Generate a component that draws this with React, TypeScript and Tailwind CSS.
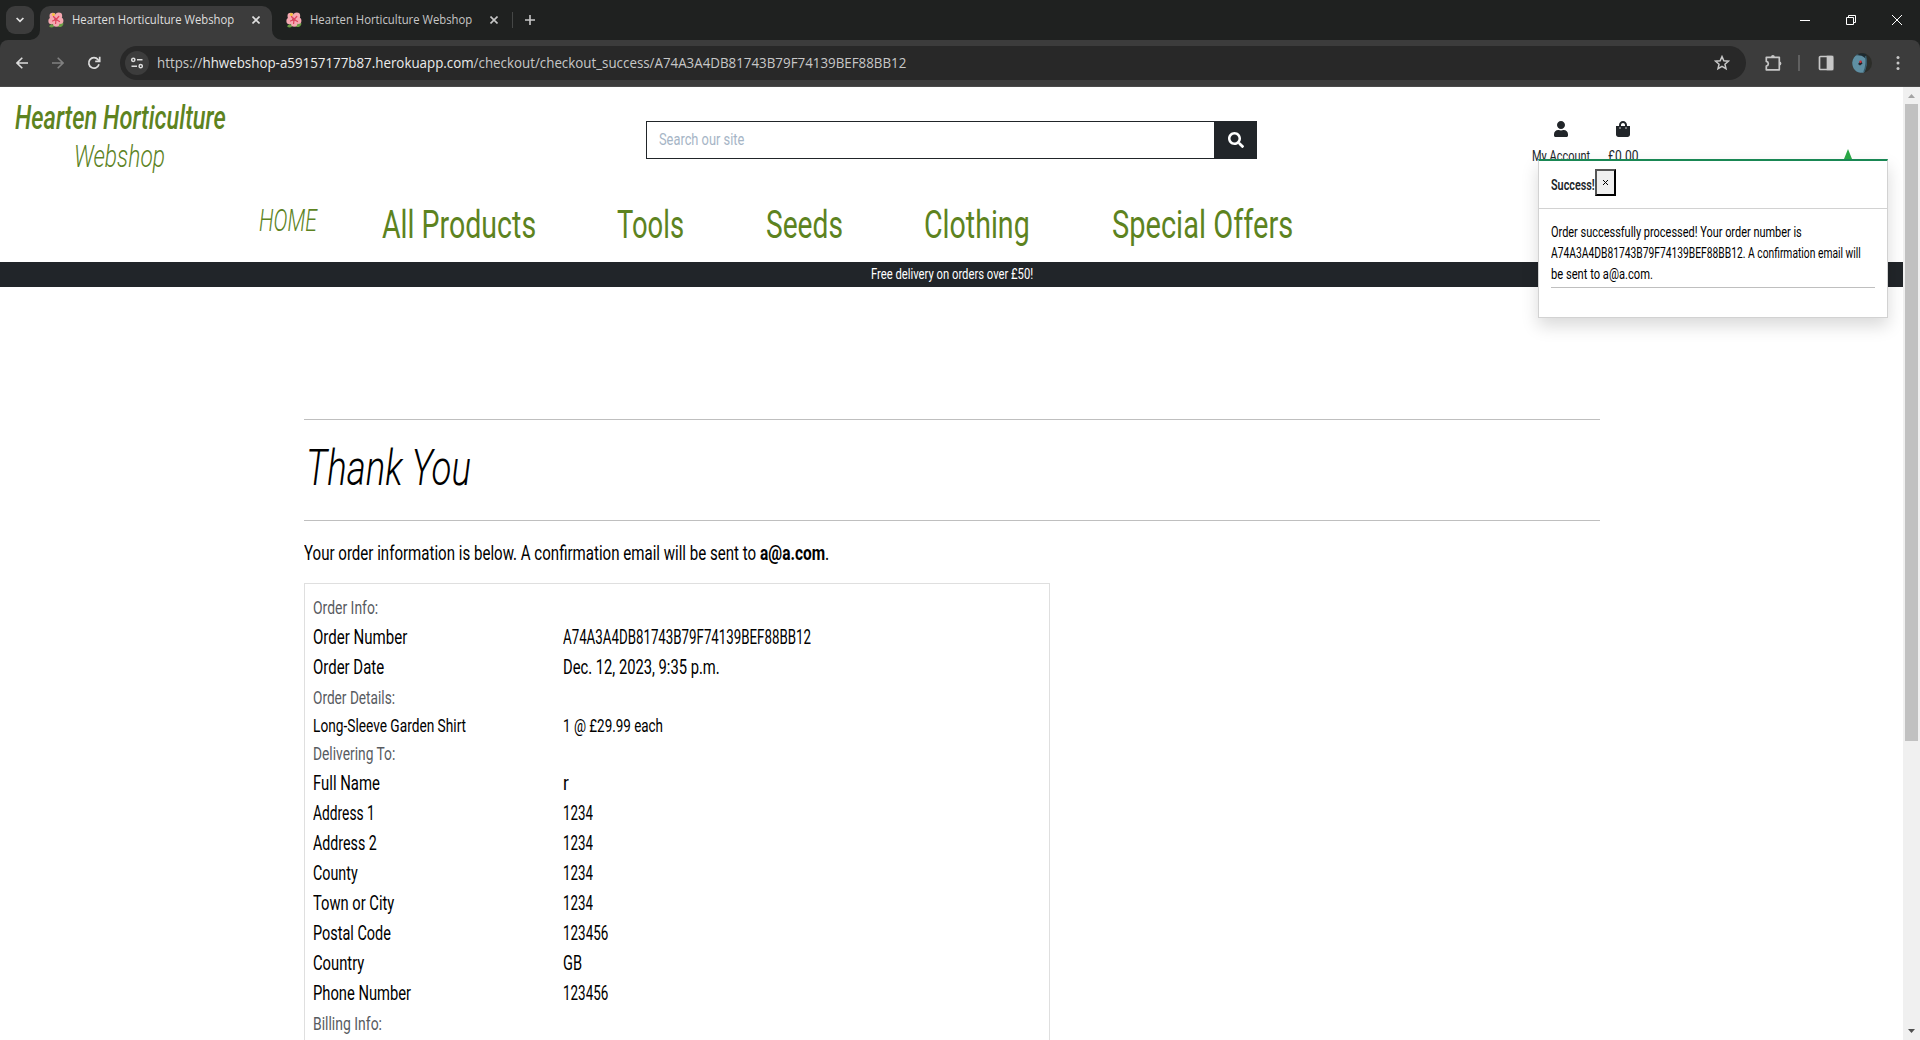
import { useLayoutEffect, useRef, useState, type ReactNode } from "react";
import { FaSearch, FaShoppingBag, FaUser } from "react-icons/fa";

/* Single-line text squeezed horizontally to a given width. */
function Fit({ w, className = "", children }: { w: number; className?: string; children: ReactNode }) {
  const ref = useRef<HTMLSpanElement>(null);
  const [scale, setScale] = useState(1);
  useLayoutEffect(() => {
    if (ref.current) setScale(w / ref.current.offsetWidth);
  }, [w]);
  return (
    <span className={`inline-block shrink-0 whitespace-nowrap text-left ${className}`} style={{ width: w }}>
      <span ref={ref} className="inline-block origin-left" style={{ transform: `scaleX(${scale})` }}>
        {children}
      </span>
    </span>
  );
}

function Hibiscus() {
  return (
    <svg viewBox="0 0 16 16" className="size-4 shrink-0">
      <path d="M1 14.200c1.500-2.400 4-2.600 6-1.200-.8 2.600-4 3.200-6 1.200zM9 14.600c1-2.800 4-4.400 6.500-3.200-.2 2.800-3.500 4.600-6.500 3.200z" fill="#6a9e45" />
      <g fill="#f5a8b1">
        <circle cx="4.800" cy="4" r="3.300" />
        <circle cx="10.800" cy="3.900" r="3.400" />
        <circle cx="12.200" cy="8.800" r="3.200" />
        <circle cx="8.200" cy="11.500" r="3.200" />
        <circle cx="3.600" cy="9" r="3.200" />
      </g>
      <path d="M8 7.500 5.500 4.500M8 7.500l2.800-3M8 7.500l3.500 2M8 7.500l-.4 4M8 7.500l-3.500 1.500" stroke="#e0425c" strokeWidth="1.200" strokeLinecap="round" />
      <circle cx="5.400" cy="2.400" r="1.500" fill="#f5c23c" />
    </svg>
  );
}

function Cross({ className }: { className: string }) {
  return (
    <svg viewBox="0 0 8 8" className={className} fill="none" stroke="currentColor" strokeWidth="1.600">
      <path d="M.5.5l7 7M7.500.5l-7 7" />
    </svg>
  );
}

function TabStrip() {
  return (
    <div className="flex h-10 bg-[#1f2120] pl-1.5 text-[12px] text-[#dfdfdf]">
      <div className="mt-1.5 flex size-7 items-center justify-center rounded-[9px] bg-[#3c3c3c]">
        <svg viewBox="0 0 8 6" className="h-1.5 w-2" fill="none" stroke="#e3e3e3" strokeWidth="1.700">
          <path d="M.6 1 4 4.400 7.400 1" />
        </svg>
      </div>
      <div className="relative ml-1.5 mt-1.5 flex w-[232px] items-center rounded-t-[10px] bg-[#3c3c3c] pb-[1px] pl-2">
        <svg viewBox="0 0 10 10" className="absolute -left-2.5 bottom-0 size-2.5" fill="#3c3c3c"><path d="M10 0v10H0A10 10 0 0 0 10 0z" /></svg>
        <svg viewBox="0 0 10 10" className="absolute -right-2.5 bottom-0 size-2.5" fill="#3c3c3c"><path d="M0 0v10h10A10 10 0 0 1 0 0z" /></svg>
        <span className="-mt-[5px]"><Hibiscus /></span>
        <Fit w={162} className="-mt-[5px] ml-2">Hearten Horticulture Webshop</Fit>
        <Cross className="-mt-[5px] ml-[18px] size-2" />
      </div>
      <div className="flex h-10 items-center pl-[14px] text-[#c7c7c7]">
        <Hibiscus />
        <Fit w={162} className="ml-2">Hearten Horticulture Webshop</Fit>
        <Cross className="ml-[18px] size-2" />
        <div className="ml-[14px] h-4 w-px bg-[#454746]" />
        <svg viewBox="0 0 10 10" className="ml-3 size-2.5" stroke="currentColor" strokeWidth="1.600"><path d="M5 0v10M0 5h10" /></svg>
      </div>
      <div className="ml-auto mr-[18px] flex h-10 items-center text-white">
        <svg viewBox="0 0 10 10" className="size-2.5" stroke="currentColor"><path d="M0 5.500h10" /></svg>
        <svg viewBox="0 0 10 10" className="ml-9 size-2.5" fill="none" stroke="currentColor"><path d="M.5 2.500h7v7h-7zM2.500 2.500v-2h7v7h-2" /></svg>
        <svg viewBox="0 0 10 10" className="ml-9 size-2.5" stroke="currentColor"><path d="M0 0l10 10M10 0 0 10" /></svg>
      </div>
    </div>
  );
}

function Toolbar() {
  return (
    <div className="bg-[#1f2120]">
      <div className="flex h-[47px] items-center rounded-t-lg border-b border-[#4a4a4a] bg-[#3c3c3c] pl-4 text-[#c7c7c7]">
        <svg viewBox="0 0 12 12" className="size-3" fill="none" stroke="#dcdcdc" strokeWidth="1.600"><path d="M12 6H1M6.300.7 1 6l5.300 5.300" /></svg>
        <svg viewBox="0 0 12 12" className="ml-6 size-3" fill="none" stroke="#808080" strokeWidth="1.600"><path d="M0 6h11M5.700.7 11 6l-5.300 5.300" /></svg>
        <svg viewBox="0 0 14 14" className="ml-[23px] size-3.5" fill="none" stroke="#dcdcdc" strokeWidth="1.700"><path d="M12 8.300A5.200 5.200 0 1 1 11 3.600L12.500 5" /><path d="M12.700.8v4.500H8.200" /></svg>
        <div className="ml-[19px] flex h-[34px] w-[1626px] items-center rounded-full bg-[#282828] pl-[5px]">
          <div className="flex size-6 items-center justify-center rounded-full bg-[#3c3c3c]">
            <svg viewBox="0 0 12 12" className="size-3" fill="none" stroke="#dcdcdc" strokeWidth="1.500">
              <circle cx="2.300" cy="2.800" r="1.600" /><path d="M6 2.800h5.500M.5 9.200H6" /><circle cx="9.700" cy="9.200" r="1.600" />
            </svg>
          </div>
          <Fit w={749} className="ml-[8px] pb-px text-[14px]">
            https://<span className="text-[#ececec]">hhwebshop-a59157177b87.herokuapp.com</span>/checkout/checkout_success/A74A3A4DB81743B79F74139BEF88BB12
          </Fit>
          <svg viewBox="0 0 16 16" className="ml-auto mr-4 size-4" fill="none" stroke="currentColor" strokeWidth="1.500">
            <path d="M8 1.600l1.850 4.200 4.550.4-3.450 3 1.050 4.500L8 11.300l-4 2.400 1.050-4.500-3.450-3 4.550-.4z" />
          </svg>
        </div>
        <svg viewBox="0 0 18 18" className="ml-[18px] size-[18px]" fill="none" stroke="currentColor" strokeWidth="1.700">
          <path d="M2.300 3.300h13v12.500h-13v-3.600c2.700-.6 2.700-4.200 0-4.800z" strokeLinejoin="round" />
          <path d="M7 3a1.900 1.900 0 0 1 3.800 0zM15.500 7.600a1.900 1.900 0 0 1 0 3.800z" fill="currentColor" stroke="none" />
        </svg>
        <div className="ml-[16px] h-4 w-0.5 bg-[#606060]" />
        <svg viewBox="0 0 16 16" className="ml-[18px] size-4" fill="none" stroke="currentColor" strokeWidth="1.700"><rect x="1.500" y="1.500" width="13" height="13" rx="1" /><path d="M9.500 1.500h5v13h-5z" fill="currentColor" /></svg>
        <svg viewBox="0 0 20 20" className="ml-[18px] size-5">
          <circle cx="10" cy="10" r="10" fill="#2c2d29" />
          <path d="M5 1.500C9 .5 14 2 14.500 7c.5 5-1 10-3 12.800C5 20.500 0 16 .2 9.500.5 6 2.500 3 5 1.500z" fill="#5f8fa3" />
          <path d="M3.500 2.500C7 0 12 0 14 1l-1 4C10 2 6 2 3.500 2.500z" fill="#1d2a30" />
          <path d="M13.500 3c1.500 5 .5 11-1.500 16" stroke="#36596a" strokeWidth="1.500" fill="none" />
          <path d="M6 11l3-3.500 1.500 3-2.500 2z" fill="#27242c" /><circle cx="8.500" cy="8.700" r="1.200" fill="#d2303a" />
        </svg>
        <svg viewBox="0 0 4 16" className="ml-[24px] h-4 w-1" fill="currentColor"><circle cx="2" cy="2.400" r="1.500" /><circle cx="2" cy="8" r="1.500" /><circle cx="2" cy="13.600" r="1.500" /></svg>
      </div>
    </div>
  );
}

function Header() {
  return (
    <header className="h-[175px] text-[#5d831f]">
      <div className="flex h-[110px]">
        <div className="flex w-[240px] flex-col items-center pt-[12px] leading-[38px] italic">
          <Fit w={211} className="text-[32.5px] font-medium">Hearten Horticulture</Fit>
          <Fit w={91} className="mr-[2px] pt-px text-[31px] font-light">Webshop</Fit>
        </div>
        <div className="ml-[406px] mt-[34px] flex h-[38px] w-[611px]">
          <div className="flex flex-1 items-center border border-[#212529] pl-3">
            <Fit w={85} className="text-[16px] text-[#a6b5c6]">Search our site</Fit>
          </div>
          <div className="flex w-[42px] items-center justify-center bg-[#212529] text-white"><FaSearch size={16} /></div>
        </div>
        <div className="ml-[275px] mt-[34px] flex gap-[18px] text-[14px] text-[#212529]">
          <div className="flex flex-col items-center">
            <FaUser size={16} />
            <Fit w={58} className="mt-[9px] leading-[21px]">My Account</Fit>
          </div>
          <div className="flex flex-col items-center">
            <FaShoppingBag size={16} />
            <Fit w={30} className="mt-[9px] leading-[21px]">£0.00</Fit>
          </div>
        </div>
      </div>
      <nav className="flex pl-[259px] text-[38px] leading-[56px]">
        <Fit w={58} className="text-[31px] leading-[48px] font-light italic">HOME</Fit>
        <Fit w={154} className="ml-[65px]">All Products</Fit>
        <Fit w={67} className="ml-[81px]">Tools</Fit>
        <Fit w={77} className="ml-[82px]">Seeds</Fit>
        <Fit w={106} className="ml-[81px]">Clothing</Fit>
        <Fit w={181} className="ml-[82px]">Special Offers</Fit>
      </nav>
    </header>
  );
}

function Toast() {
  return (
    <div className="absolute left-[1538px] top-[72px] h-[159px] w-[350px] border border-t-2 border-[#d2d2d2] border-t-[#198754] bg-white text-[14px] leading-[21px] shadow-[0_8px_16px_rgba(0,0,0,0.15)]">
      <svg viewBox="0 0 8 10" className="absolute -top-3 left-[305px] h-2.5 w-2" fill="#28a745"><path d="M4 0l4 10H0z" /></svg>
      <div className="flex h-[48px] border-b border-[#d2d2d2] pl-[12px] pt-2 text-[#212529]">
        <Fit w={44} className="pt-[6px] font-semibold">Success!</Fit>
        <div className="flex h-[27px] w-[21px] items-center justify-center border-2 border-[#555] border-b-black border-r-black bg-[#efefef] text-black">
          <svg viewBox="0 0 5 5" className="size-[5px]" stroke="currentColor"><path d="M0 0l5 5M5 0 0 5" /></svg>
        </div>
      </div>
      <div className="mx-3 flex h-[79px] flex-col border-b border-[#bfbfbf] pt-[13px] text-black">
        <Fit w={251}>Order successfully processed! Your order number is</Fit>
        <Fit w={310}>A74A3A4DB81743B79F74139BEF88BB12. A confirmation email will</Fit>
        <Fit w={102}>be sent to a@a.com.</Fit>
      </div>
    </div>
  );
}

function Heading({ w, children }: { w: number; children: string }) {
  return (
    <div className="flex h-[30px] pt-[1px] text-[18px] leading-[28px] text-[#585b5f]">
      <Fit w={w}>{children}</Fit>
    </div>
  );
}

function Row({ label, lw, value, vw }: { label: string; lw: number; value: string; vw: number }) {
  return (
    <div className="grid h-[30px] grid-cols-[250px_1fr] text-[20px] leading-[29px]">
      <Fit w={lw}>{label}</Fit>
      <Fit w={vw}>{value}</Fit>
    </div>
  );
}

const delivery = [
  { label: "Full Name", lw: 67, value: "r", vw: 6 },
  { label: "Address 1", lw: 62, value: "1234", vw: 30 },
  { label: "Address 2", lw: 64, value: "1234", vw: 30 },
  { label: "County", lw: 45, value: "1234", vw: 30 },
  { label: "Town or City", lw: 81, value: "1234", vw: 30 },
  { label: "Postal Code", lw: 78, value: "123456", vw: 45 },
  { label: "Country", lw: 51, value: "GB", vw: 19 },
  { label: "Phone Number", lw: 98, value: "123456", vw: 45 },
];

function Order() {
  return (
    <main className="ml-[304px] w-[1296px] pt-[132px] text-black">
      <div className="flex h-[102px] border-y border-[#bfbfbf] pl-[2px] pt-[16px]">
        <Fit w={165} className="text-[49px] leading-[66px] font-light italic">Thank You</Fit>
      </div>
      <p className="flex pt-[17px] text-[20px] leading-[30px]">
        <Fit w={452}>Your order information is below. A confirmation email will be sent to</Fit>
        <Fit w={65} className="ml-[4px] font-bold">a@a.com</Fit>
        <Fit w={4}>.</Fit>
      </p>
      <section className="mt-[15px] h-[600px] w-[746px] border border-[#dfdfdf] pl-2 pt-[9px]">
        <Heading w={65}>Order Info:</Heading>
        <Row label="Order Number" lw={94} value="A74A3A4DB81743B79F74139BEF88BB12" vw={248} />
        <Row label="Order Date" lw={71} value="Dec. 12, 2023, 9:35 p.m." vw={157} />
        <Heading w={82}>Order Details:</Heading>
        <div className="grid h-[26px] grid-cols-[250px_1fr] text-[18px] leading-[25px]">
          <Fit w={153}>Long-Sleeve Garden Shirt</Fit>
          <Fit w={100}>1 @ £29.99 each</Fit>
        </div>
        <Heading w={82}>Delivering To:</Heading>
        {delivery.map((r) => (
          <Row key={r.label} {...r} />
        ))}
        <Heading w={69}>Billing Info:</Heading>
      </section>
    </main>
  );
}

export default function App() {
  return (
    <div className="flex h-[1040px] w-[1920px] flex-col overflow-hidden bg-white font-['Open_Sans',sans-serif]">
      <TabStrip />
      <Toolbar />
      <div className="flex min-h-0 flex-1">
        <div className="relative w-[1903px] overflow-hidden font-[Roboto,sans-serif]">
          <Header />
          <div className="flex h-[25px] justify-center bg-[#212529] text-[14.5px] leading-[26px] text-white">
            <Fit w={162}>Free delivery on orders over £50!</Fit>
          </div>
          <Order />
          <Toast />
        </div>
        <div className="flex w-[17px] flex-col items-center bg-[#f0f0f0]">
          <svg viewBox="0 0 7 4" className="my-[6.500px] h-1 w-[7px] shrink-0" fill="#a3a3a3"><path d="M3.500 0 7 4H0z" /></svg>
          <div className="h-[637px] w-[13px] bg-[#c1c1c1]" />
          <svg viewBox="0 0 7 4" className="mb-[7px] mt-auto h-1 w-[7px] shrink-0" fill="#505050"><path d="M0 0h7L3.500 4z" /></svg>
        </div>
      </div>
    </div>
  );
}
